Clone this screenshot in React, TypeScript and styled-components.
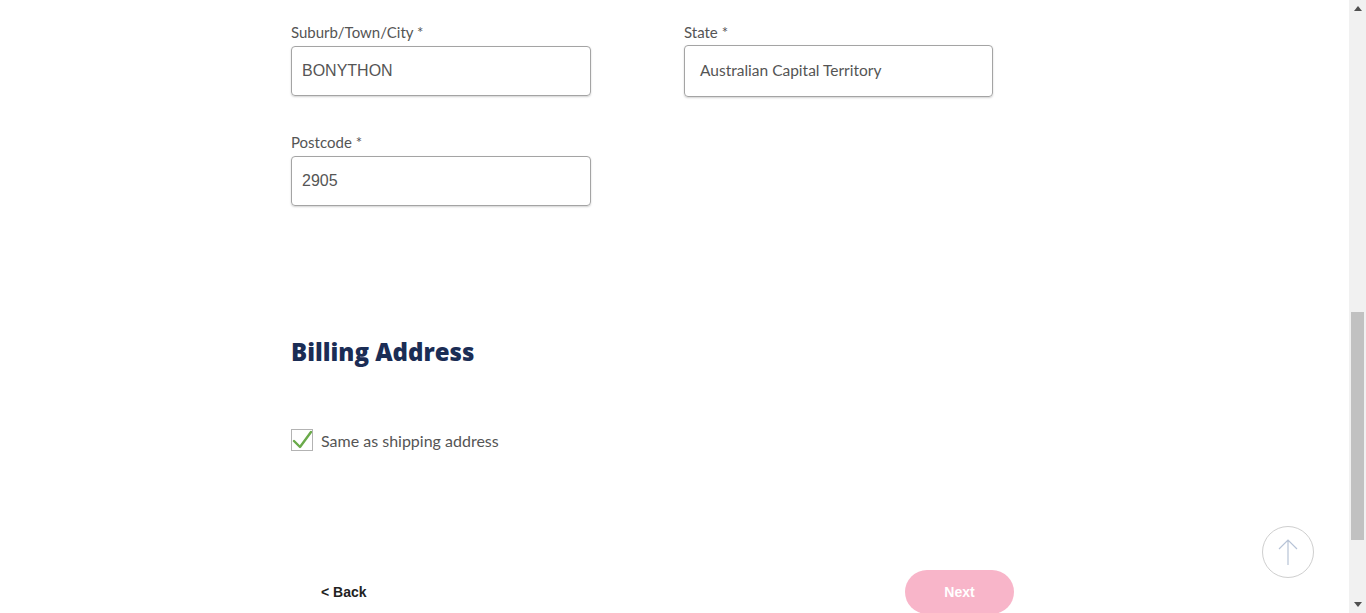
import React from "react";
import styled, { createGlobalStyle } from "styled-components";

const Global = createGlobalStyle`
  html, body { margin: 0; padding: 0; background: #fff; overflow: hidden; }
  * { box-sizing: border-box; }
`;

const Page = styled.div`
  display: flex;
  width: 1366px;
  height: 613px;
  overflow: hidden;
  background: #fff;
`;

const Main = styled.div`
  flex: 1;
  position: relative;
  padding: 23px 0 0 291px;
`;

const Grid = styled.div`
  display: grid;
  grid-template-columns: 393px 393px;
  row-gap: 36px;
`;

const Field = styled.div`
  display: flex;
  flex-direction: column;
`;

const Label = styled.label<{ $gap: number }>`
  font-family: Lato, "Open Sans", sans-serif;
  font-size: 15px;
  line-height: 18px;
  color: #555;
  margin-bottom: ${(p) => p.$gap}px;
`;

const Input = styled.div<{ $w: number; $h: number; $font: string; $size: number; $pad: number; $lift?: number }>`
  width: ${(p) => p.$w}px;
  height: ${(p) => p.$h}px;
  border: 1px solid #a4a4a4;
  border-radius: 4px;
  box-shadow: 0 1px 2px rgba(0, 0, 0, 0.18);
  display: flex;
  align-items: center;
  padding-left: ${(p) => p.$pad}px;
  padding-bottom: ${(p) => p.$lift ?? 0}px;
  font-family: ${(p) => p.$font};
  font-size: ${(p) => p.$size}px;
  color: #555;
`;

const Heading = styled.h2`
  margin: 131px 0 0;
  font-family: "Open Sans", Lato, sans-serif;
  font-weight: 800;
  font-size: 24px;
  line-height: 30px;
  color: #1b2d55;
`;

const CheckRow = styled.div`
  display: flex;
  align-items: center;
  gap: 8px;
  margin-top: 62px;
`;

const Box = styled.div`
  width: 22px;
  height: 22px;
  border: 1px solid #b3b3b3;
  display: flex;
  align-items: center;
  justify-content: center;
`;

const CheckText = styled.span`
  font-family: Lato, sans-serif;
  font-size: 16px;
  color: #555;
`;

const Actions = styled.div`
  display: flex;
  align-items: flex-start;
  justify-content: space-between;
  width: 723px;
  margin-top: 119px;
`;

const Back = styled.span`
  font-family: "Liberation Sans", Arial, sans-serif;
  font-weight: 700;
  font-size: 14px;
  line-height: 16px;
  color: #222;
  padding: 14px 0 0 30px;
`;

const Next = styled.div`
  width: 109px;
  height: 44px;
  border-radius: 22px;
  background: #f8b5c9;
  color: #fff;
  font-family: "Liberation Sans", Arial, sans-serif;
  font-weight: 700;
  font-size: 14px;
  display: flex;
  align-items: center;
  justify-content: center;
`;

const UpButton = styled.div`
  position: absolute;
  left: 1262px;
  top: 526px;
  width: 52px;
  height: 52px;
  border: 1px solid #cfcfcf;
  border-radius: 50%;
  display: flex;
  align-items: center;
  justify-content: center;
  background: #fff;
`;

const Scrollbar = styled.div`
  width: 17px;
  height: 613px;
  background: #f1f1f1;
  display: flex;
  flex-direction: column;
  align-items: center;
`;

const Arrow = styled.div`
  height: 17px;
  width: 17px;
  display: flex;
  align-items: center;
  justify-content: center;
`;

const Track = styled.div`
  flex: 1;
  width: 100%;
  display: flex;
  flex-direction: column;
  align-items: center;
  padding-top: 295px;
`;

const Thumb = styled.div`
  width: 13px;
  height: 228px;
  background: #c1c1c1;
`;

export default function App() {
  return (
    <>
      <Global />
      <Page>
        <Main>
          <Grid>
            <Field>
              <Label $gap={5}>Suburb/Town/City *</Label>
              <Input $w={300} $h={50} $font={`"Liberation Sans", Arial, sans-serif`} $size={16} $pad={10}>
                BONYTHON
              </Input>
            </Field>
            <Field>
              <Label $gap={4}>State *</Label>
              <Input $w={309} $h={52} $font={`Lato, sans-serif`} $size={15.5} $pad={15} $lift={2}>
                Australian Capital Territory
              </Input>
            </Field>
            <Field>
              <Label $gap={5}>Postcode *</Label>
              <Input $w={300} $h={50} $font={`"Liberation Sans", Arial, sans-serif`} $size={16} $pad={10}>
                2905
              </Input>
            </Field>
          </Grid>
          <Heading>Billing Address</Heading>
          <CheckRow>
            <Box>
              <svg width="20" height="20" viewBox="0 0 20 20">
                <path d="M2 11 L8 17 L19 2" fill="none" stroke="#6aaa4a" strokeWidth="2.4" strokeLinecap="round" strokeLinejoin="round" />
              </svg>
            </Box>
            <CheckText>Same as shipping address</CheckText>
          </CheckRow>
          <Actions>
            <Back>&lt; Back</Back>
            <Next>Next</Next>
          </Actions>
          <UpButton>
            <svg width="26" height="28" viewBox="0 0 26 28">
              <path d="M13 2 V27 M4 11 L13 2 L22 11" fill="none" stroke="#b7c3d6" strokeWidth="1.2" />
            </svg>
          </UpButton>
        </Main>
        <Scrollbar>
          <Arrow>
            <svg width="8" height="5" viewBox="0 0 8 5"><path d="M0 5 L4 0 L8 5 Z" fill="#505050" /></svg>
          </Arrow>
          <Track>
            <Thumb />
          </Track>
          <Arrow>
            <svg width="8" height="5" viewBox="0 0 8 5"><path d="M0 0 L4 5 L8 0 Z" fill="#505050" /></svg>
          </Arrow>
        </Scrollbar>
      </Page>
    </>
  );
}
